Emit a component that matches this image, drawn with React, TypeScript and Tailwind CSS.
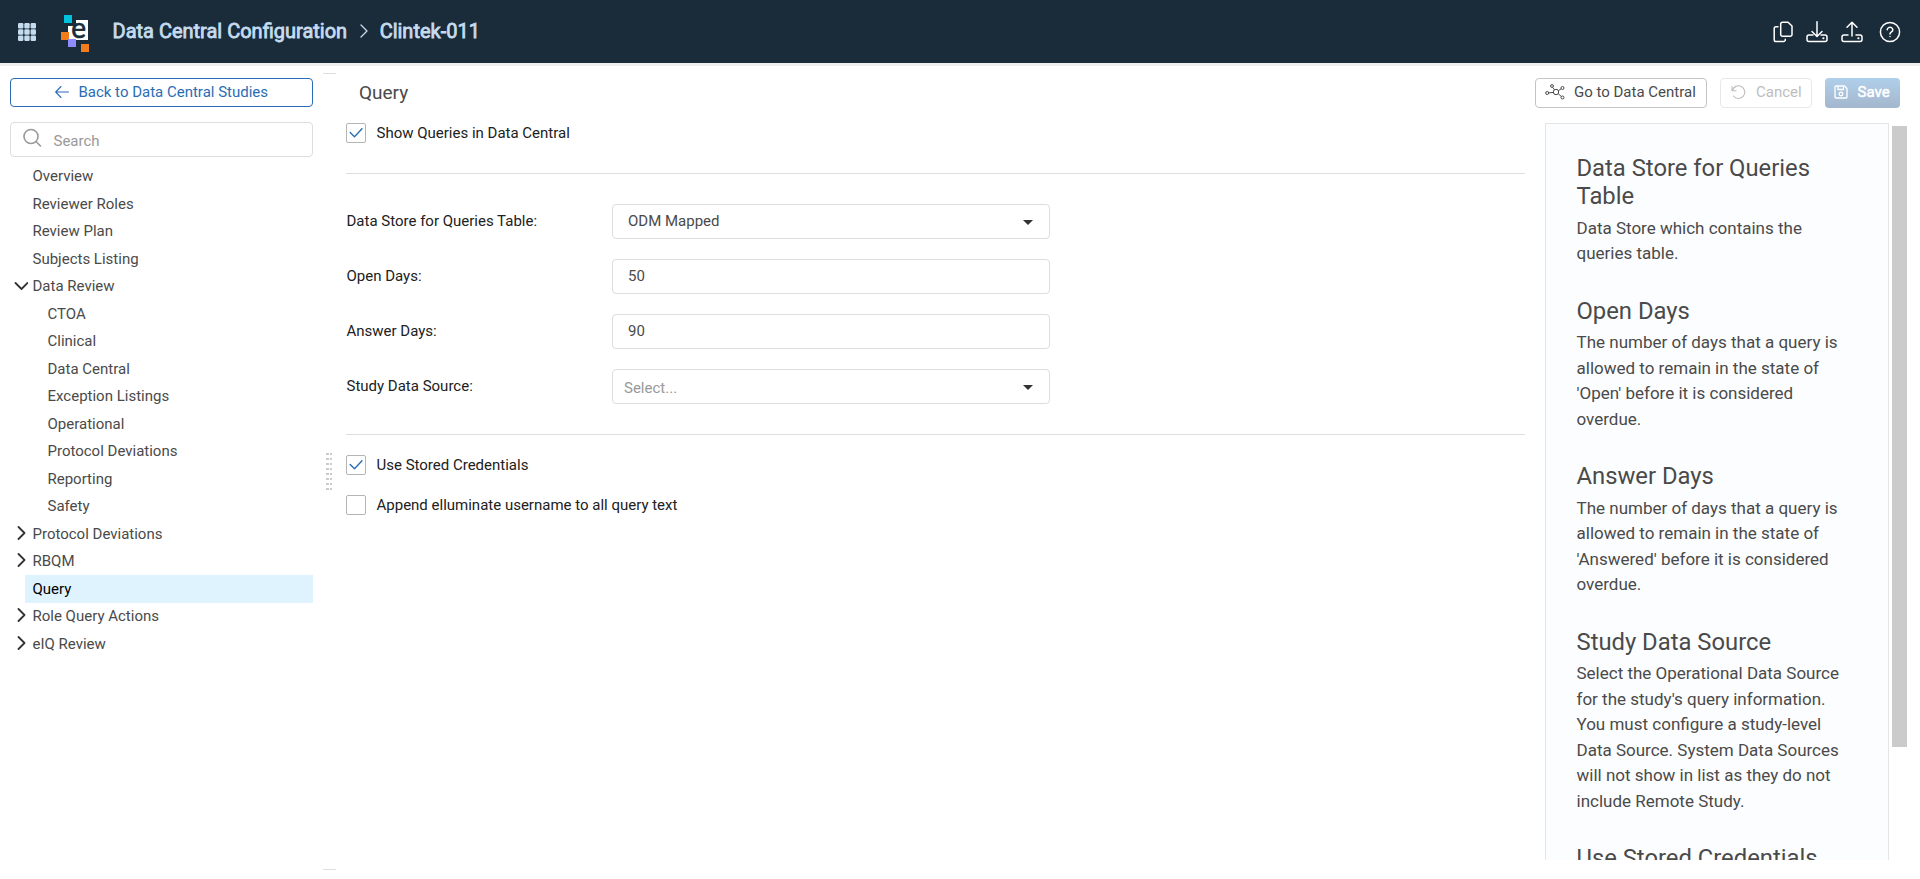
import { useState } from 'react';
import type { ReactNode } from 'react';
import clsx from 'clsx';

interface TreeItem {
  label: string;
  level?: number;
  state?: 'open' | 'closed';
}

const treeItems: TreeItem[] = [
  { label: 'Overview' },
  { label: 'Reviewer Roles' },
  { label: 'Review Plan' },
  { label: 'Subjects Listing' },
  { label: 'Data Review', state: 'open' },
  { label: 'CTOA', level: 1 },
  { label: 'Clinical', level: 1 },
  { label: 'Data Central', level: 1 },
  { label: 'Exception Listings', level: 1 },
  { label: 'Operational', level: 1 },
  { label: 'Protocol Deviations', level: 1 },
  { label: 'Reporting', level: 1 },
  { label: 'Safety', level: 1 },
  { label: 'Protocol Deviations', state: 'closed' },
  { label: 'RBQM', state: 'closed' },
  { label: 'Query' },
  { label: 'Role Query Actions', state: 'closed' },
  { label: 'eIQ Review', state: 'closed' },
];

const helpTopics = [
  {
    title: 'Data Store for Queries Table',
    text: 'Data Store which contains the queries table.',
  },
  {
    title: 'Open Days',
    text: "The number of days that a query is allowed to remain in the state of 'Open' before it is considered overdue.",
  },
  {
    title: 'Answer Days',
    text: "The number of days that a query is allowed to remain in the state of 'Answered' before it is considered overdue.",
  },
  {
    title: 'Study Data Source',
    text: "Select the Operational Data Source for the study's query information. You must configure a study-level Data Source. System Data Sources will not show in list as they do not include Remote Study.",
  },
  {
    title: 'Use Stored Credentials',
  },
];

// ICONS

function Logo() {
  return (
    <svg
      width="28"
      height="38"
      viewBox="0 0 28 38"
      className="shrink-0 overflow-visible"
    >
      <rect x="3" y="0" width="8" height="8" fill="#00c1de" />
      <path d="M15 5h12v20H7V11h8z" fill="#fff" />
      <rect x="0" y="17" width="8" height="8" fill="#f07d1a" />
      <rect x="7" y="24" width="8" height="8" fill="#8f8bff" />
      <rect x="20" y="29" width="8" height="8" fill="#f07d1a" />
      <text
        x="10.2"
        y="23.4"
        fontSize="28"
        fill="#1a2b3a"
        stroke="#1a2b3a"
        strokeWidth="0.7"
        fontFamily="Lato, sans-serif"
      >
        e
      </text>
    </svg>
  );
}

function Stroke({
  size,
  width = 1.2,
  className,
  children,
}: {
  size: number;
  width?: number;
  className?: string;
  children: ReactNode;
}) {
  return (
    <svg
      width={size}
      height={size}
      viewBox={`0 0 ${size} ${size}`}
      fill="none"
      stroke="currentColor"
      strokeWidth={width}
      strokeLinecap="round"
      strokeLinejoin="round"
      className={clsx('shrink-0', className)}
    >
      {children}
    </svg>
  );
}

function AppsIcon() {
  const cells = [0, 6.3, 12.6];
  return (
    <svg width="18" height="18" viewBox="0 0 18 18" fill="#c5dcef">
      {cells.map((y) =>
        cells.map((x) => (
          <rect key={`${x}-${y}`} x={x} y={y} width="5.4" height="5.4" rx="1.2" />
        ))
      )}
    </svg>
  );
}

function CopyIcon() {
  return (
    <Stroke size={22} width={1.5}>
      <path d="M10.5 1.2H16l4 3.8v8.500a1.800 1.800 0 0 1-1.800 1.800h-7.700a1.800 1.800 0 0 1-1.800-1.800V3a1.800 1.800 0 0 1 1.800-1.800z" />
      <path d="M6 5.800H4A1.800 1.800 0 0 0 2.200 7.600v11.200A1.800 1.800 0 0 0 4 20.600h7.500a1.800 1.800 0 0 0 1.800-1.800v-.5" />
    </Stroke>
  );
}

function DriveIcon({ up = false }: { up?: boolean }) {
  return (
    <Stroke size={22} width={1.5}>
      <path d={up ? 'M11 15V1.2M6 6.2l5-5 5 5' : 'M11 .8v14.500M6 10.500l5 5 5-5'} />
      <path d="M7 14H3a2 2 0 0 0-2 2v2.600a2 2 0 0 0 2 2h16a2 2 0 0 0 2-2V16a2 2 0 0 0-2-2h-4" />
      <path d="M17.300 17.300h.2" strokeWidth="2" />
    </Stroke>
  );
}

function HelpIcon() {
  return (
    <Stroke size={22} width={1.5}>
      <circle cx="11" cy="11" r="9.6" />
      <path d="M8.200 8.700a2.800 2.500 0 1 1 4.300 2.200c-.9.6-1.500 1-1.500 2.100" />
      <path d="M11 15.400v.2" />
    </Stroke>
  );
}

function NetworkIcon() {
  return (
    <svg
      width="20"
      height="16"
      viewBox="0 0 20 16"
      fill="none"
      stroke="currentColor"
      strokeWidth="1"
    >
      <circle cx="11" cy="8" r="2.7" />
      <circle cx="2.2" cy="9" r="1.5" />
      <circle cx="7" cy="2" r="1.4" />
      <circle cx="17.5" cy="4" r="1.5" />
      <circle cx="17.5" cy="13.5" r="1.5" />
      <path d="M3.700 8.900l4.600-.5M7.700 3.300l1.800 2.500M13.400 6.600l2.800-1.800M13.200 9.700l3.100 2.800" />
    </svg>
  );
}

function Caret() {
  return (
    <svg width="10" height="5" viewBox="0 0 10 5" fill="#333" className="mt-0.5">
      <path d="M0 0h10L5 5z" />
    </svg>
  );
}

// FORM PARTS

function CheckRow({
  label,
  defaultChecked = false,
}: {
  label: string;
  defaultChecked?: boolean;
}) {
  const [checked, setChecked] = useState(defaultChecked);

  return (
    <button
      role="checkbox"
      aria-checked={checked}
      onClick={() => setChecked(!checked)}
      className="flex h-5 items-center gap-[10.5px] text-[#212121]"
    >
      <span className="flex size-5 items-center justify-center rounded-[2px] border border-[#b5b5b5] text-[#2a6db5]">
        {checked && (
          <Stroke size={14} width={1.4}>
            <path d="M1.200 6.500l4.300 4.200L13 2.800" />
          </Stroke>
        )}
      </span>
      {label}
    </button>
  );
}

function FieldRow({ label, children }: { label: string; children: ReactNode }) {
  return (
    <div className="flex h-[35px]">
      <div className="w-[266px] pt-1.5 pl-[0.5px] text-[#212121]">{label}</div>
      <div className="flex w-[438px] items-center justify-between rounded-[4px] border border-[#dddddd] pr-4 pl-[15px]">
        {children}
      </div>
    </div>
  );
}

export default function App() {
  const [selected, setSelected] = useState(15);

  return (
    <div className="flex h-[879px] w-[1920px] flex-col overflow-hidden bg-white font-[Roboto,sans-serif] text-[15px] leading-[22px] text-[#4a4a4a]">
      {/* HEADER */}
      <header className="flex h-[66px] shrink-0 items-center border-b-[3px] border-[#eeeeee] bg-[#1a2b3a] pr-[19px] pl-[18px] text-white">
        <AppsIcon />
        <div className="ml-[25px] pt-1">
          <Logo />
        </div>
        <div className="ml-[23.5px] flex items-center pb-px text-xl text-[#c5dcef] [-webkit-text-stroke:0.8px_#c5dcef]">
          <span>Data Central Configuration</span>
          <Stroke size={16} width={1.3} className="mr-2 ml-[8.5px]">
            <path d="M5 2l6 6-6 6" />
          </Stroke>
          <span>Clintek-011</span>
        </div>
        <div className="ml-auto flex items-center">
          <CopyIcon />
          <div className="ml-[11.5px]">
            <DriveIcon />
          </div>
          <div className="ml-[13px]">
            <DriveIcon up />
          </div>
          <div className="ml-[16.5px]">
            <HelpIcon />
          </div>
        </div>
      </header>

      <div className="flex min-h-0 flex-1">
        {/* SIDEBAR */}
        <aside className="w-[313px] pt-3 pl-2.5">
          <button className="flex h-[29px] w-full items-center justify-center gap-[9.5px] rounded-[4px] border border-[#2a6db5] pb-0.5 text-[#2a6db5]">
            <Stroke size={14} width={1.1}>
              <path d="M13.500 7H.7M6 1.500L.7 7 6 12.500" />
            </Stroke>
            Back to Data Central Studies
          </button>
          <div className="mt-[15px] flex h-[35px] items-center gap-[11.5px] rounded-[4px] border border-[#dddddd] pl-[11px] text-[#999]">
            <Stroke size={20} width={1.6} className="mb-1">
              <circle cx="9" cy="8.5" r="7" />
              <path d="M14 13.500l4.500 4.500" />
            </Stroke>
            <span className="pt-0.5">Search</span>
          </div>

          <ul className="mt-[5.5px]">
            {treeItems.map((item, i) => (
              <li key={i} className="flex h-[27.5px]">
                <span className="flex w-[15px] items-center pb-0.5 pl-1 text-[#333]">
                  {item.state && (
                    <Stroke size={14} width={1.8}>
                      <path
                        d={item.state === 'open' ? 'M1.500 5l6 6 6-6' : 'M4.500 1l6 6-6 6'}
                      />
                    </Stroke>
                  )}
                </span>
                <button
                  onClick={() => setSelected(i)}
                  className={clsx(
                    'flex-1 text-left',
                    item.level ? 'pl-[22.5px]' : 'pl-[7.5px]',
                    i === selected && 'bg-[#dff3ff] text-black'
                  )}
                >
                  {item.label}
                </button>
              </li>
            ))}
          </ul>
        </aside>

        {/* SPLITTER */}
        <div className="mt-[7px] ml-2.5 flex h-[797px] w-[13px] flex-col items-center justify-center border-y border-[#dddddd] pr-px">
          <div className="grid grid-cols-2 gap-x-px gap-y-[2.5px]">
            {Array.from({ length: 16 }, (_, i) => (
              <span key={i} className="size-[2.5px] bg-[#cbcbcb]" />
            ))}
          </div>
        </div>

        {/* MAIN */}
        <main className="flex flex-1 flex-col pl-2.5">
          <div className="flex h-[57px] pt-3">
            <h1 className="pt-1 pl-[13px] text-[19px]">Query</h1>
            <div className="ml-auto flex h-[30px] gap-[13px] pr-5">
              <button className="flex w-[172px] items-center gap-[9px] rounded-[4px] border border-[#c4c4c4] pb-0.5 pl-[9px]">
                <NetworkIcon />
                Go to Data Central
              </button>
              <button className="flex w-[92px] items-center gap-2.5 rounded-[4px] border border-[#e8e8e8] pb-0.5 pl-2.5 text-[#bdbdbd]">
                <Stroke size={15} width={1.1}>
                  <path d="M1 1.500v4.200h4.200M1.400 5.500A6.300 6.300 0 1 1 2.500 11" />
                </Stroke>
                Cancel
              </button>
              <button className="flex w-[75px] items-center gap-[9.5px] rounded-[4px] bg-linear-to-b from-[#b0cfea] to-[#a3b7cd] pb-0.5 pl-[9px] text-white [-webkit-text-stroke:0.5px_#fff]">
                <Stroke size={14} width={1.3}>
                  <path d="M1 2a1 1 0 0 1 1-1h8.500L13 3.500V12a1 1 0 0 1-1 1H2a1 1 0 0 1-1-1zM4 1v3.500h5.500V1" />
                  <circle cx="7" cy="9" r="1.8" />
                </Stroke>
                Save
              </button>
            </div>
          </div>

          <div className="flex min-h-0 flex-1">
            <section className="w-[1179px]">
              <CheckRow label="Show Queries in Data Central" defaultChecked />

              <div className="mt-[30px] flex flex-col gap-5 border-y border-[#dddddd] pt-[30px] pb-[30px]">
                <FieldRow label="Data Store for Queries Table:">
                  <span className="pb-0.5">ODM Mapped</span>
                  <Caret />
                </FieldRow>
                <FieldRow label="Open Days:">
                  <span className="pb-0.5">50</span>
                </FieldRow>
                <FieldRow label="Answer Days:">
                  <span className="pb-0.5">90</span>
                </FieldRow>
                <FieldRow label="Study Data Source:">
                  <span className="-ml-1 pt-0.5 text-[#999]">Select...</span>
                  <Caret />
                </FieldRow>
              </div>

              <div className="mt-5 flex flex-col items-start gap-5">
                <CheckRow label="Use Stored Credentials" defaultChecked />
                <CheckRow label="Append elluminate username to all query text" />
              </div>
            </section>

            {/* HELP */}
            <div className="ml-5 h-[737px] w-[344px] overflow-hidden">
              <div className="h-[900px] border border-[#e3e5e8] bg-[#fcfdff] pt-[29.5px] pr-[35px] pl-[30.5px]">
                {helpTopics.map((topic) => (
                  <div key={topic.title} className="mb-[30px]">
                    <h2 className="mb-[5px] text-[23.8px] leading-[28.5px]">
                      {topic.title}
                    </h2>
                    <p className="text-[17px] leading-[25.5px]">{topic.text}</p>
                  </div>
                ))}
              </div>
            </div>
            <div className="mt-[3px] ml-[3px] h-[621px] w-[15px] bg-[#cbcbcb]" />
          </div>
        </main>
      </div>
    </div>
  );
}
